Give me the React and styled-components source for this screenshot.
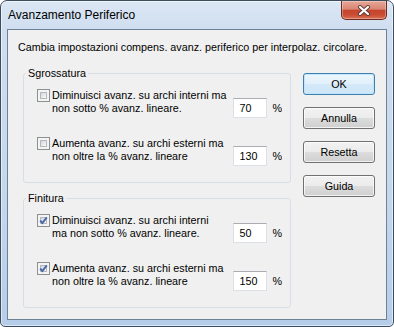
import React from 'react';
import styled, { createGlobalStyle } from 'styled-components';

const font = `"Liberation Sans", Arial, sans-serif`;

const GlobalStyle = createGlobalStyle`
  html, body {
    margin: 0;
    padding: 0;
    background: #ffffff;
  }
  body {
    font-family: ${font};
    color: #000000;
  }
`;

const Window = styled.div`
  box-sizing: border-box;
  width: 394px;
  height: 327px;
  display: flex;
  flex-direction: column;
  padding: 0 6px 6px;
  border: 1px solid #3e4d5e;
  border-radius: 7px 7px 5px 5px;
  background: linear-gradient(to bottom, #dce7f4 0px, #cfdef0 28px, #c4d7ed 60%, #b6cde9 100%);
  box-shadow: inset 0 0 0 1px rgba(255, 255, 255, 0.55);
`;

const TitleBar = styled.div`
  height: 28px;
  display: flex;
  justify-content: space-between;
  align-items: flex-start;
`;

const Title = styled.span`
  align-self: center;
  padding-left: 1px;
  font-size: 12px;
`;

const CloseButton = styled.div`
  box-sizing: border-box;
  width: 46px;
  height: 19px;
  display: flex;
  align-items: center;
  justify-content: center;
  border: 1px solid #6b2c24;
  border-top: none;
  border-radius: 0 0 5px 5px;
  background: linear-gradient(to bottom, #e7a797 0%, #d98673 45%, #c3452d 52%, #c94d33 78%, #db7257 100%);
  box-shadow: inset 0 0 0 1px rgba(255, 255, 255, 0.3);
`;

const Client = styled.div`
  flex: 1;
  display: flex;
  flex-direction: column;
  border: 1px solid #6f8196;
  background: #f0f0f0;
  padding: 10px 10px 0;
`;

const Description = styled.div`
  font-size: 10.75px;
  line-height: 15px;
`;

const MainRow = styled.div`
  display: flex;
  align-items: flex-start;
  gap: 12px;
  margin: 11px 0 0 5px;
`;

const Groups = styled.div`
  display: flex;
  flex-direction: column;
  gap: 8px;
`;

const Group = styled.fieldset`
  box-sizing: border-box;
  width: 268px;
  min-width: 0;
  margin: 0;
  padding: 0;
  border: 1px solid #d5dfe5;
  border-radius: 3px;
`;

const Legend = styled.legend`
  padding: 0 2px;
  margin-left: 2px;
  font-size: 10.75px;
  line-height: 14px;
`;

const Options = styled.div`
  display: flex;
  flex-direction: column;
  gap: 19px;
  padding: 9px 8px 16px 13px;
`;

const Row = styled.div`
  display: flex;
  align-items: flex-start;
`;

const Box = styled.span`
  box-sizing: border-box;
  position: relative;
  width: 13px;
  height: 13px;
  flex-shrink: 0;
  margin-right: 2px;
  border: 1px solid #8e8f8f;
  background: #f4f4f4;
  display: flex;
  align-items: center;
  justify-content: center;

  &::before {
    content: '';
    position: absolute;
    inset: 2px;
    border: 1px solid #b4b8bd;
    background: linear-gradient(135deg, #d4d6d9 0%, #e8e9eb 55%, #f7f7f7 100%);
  }

  svg {
    position: relative;
  }
`;

const Label = styled.span`
  flex: 1;
  font-size: 10.75px;
  line-height: 13px;
`;

const Field = styled.input`
  box-sizing: border-box;
  width: 34px;
  height: 20px;
  margin: 9px 0 0;
  padding: 0 5px;
  border: 1px solid #dbdfe6;
  border-top-color: #abadb3;
  background: #ffffff;
  font-family: ${font};
  font-size: 10.75px;
  color: #000000;
  outline: none;
`;

const Percent = styled.span`
  margin: 9px 0 0 5px;
  font-size: 10.75px;
  line-height: 20px;
`;

const Buttons = styled.div`
  display: flex;
  flex-direction: column;
  gap: 12px;
  margin-top: 7px;
`;

const Button = styled.button`
  box-sizing: border-box;
  width: 72px;
  height: 22px;
  padding: 0;
  border: 1px solid ${(p) => (p.$default ? '#3c7fb1' : '#707070')};
  border-radius: 3px;
  font-family: ${font};
  font-size: 10.75px;
  color: #000000;
  background: ${(p) =>
    p.$default
      ? 'linear-gradient(to bottom, #edf6fd 0%, #e2f0fb 50%, #d4e9f9 51%, #cfe6f8 100%)'
      : 'linear-gradient(to bottom, #f2f2f2 0%, #ebebeb 50%, #dddddd 51%, #cfcfcf 100%)'};
  box-shadow: inset 0 0 0 1px ${(p) => (p.$default ? 'rgba(190, 230, 253, 0.9)' : 'rgba(255, 255, 255, 0.75)')};
`;

const Checkbox = ({ checked }) => (
  <Box>
    {checked && (
      <svg width="11" height="11" viewBox="0 0 11 11">
        <path d="M2.2 5.6 L4.4 8 L8.8 2.4" fill="none" stroke="#4a69a8" strokeWidth="2" />
      </svg>
    )}
  </Box>
);

const Option = ({ checked, lines, value }) => (
  <Row>
    <Checkbox checked={checked} />
    <Label>
      {lines[0]}
      <br />
      {lines[1]}
    </Label>
    <Field readOnly value={value} />
    <Percent>%</Percent>
  </Row>
);

const groups = [
  {
    title: 'Sgrossatura',
    checked: false,
    options: [
      { lines: ['Diminuisci avanz. su archi interni ma', 'non sotto % avanz. lineare.'], value: '70' },
      { lines: ['Aumenta avanz. su archi esterni ma', 'non oltre la % avanz. lineare'], value: '130' },
    ],
  },
  {
    title: 'Finitura',
    checked: true,
    options: [
      { lines: ['Diminuisci avanz. su archi interni', 'ma non sotto % avanz. lineare.'], value: '50' },
      { lines: ['Aumenta avanz. su archi esterni ma', 'non oltre la % avanz. lineare'], value: '150' },
    ],
  },
];

const App = () => (
  <>
    <GlobalStyle />
    <Window>
      <TitleBar>
        <Title>Avanzamento Periferico</Title>
        <CloseButton>
          <svg width="14" height="11" viewBox="0 0 14 11">
            <path d="M3 2 L11 9 M11 2 L3 9" stroke="#5b3a36" strokeWidth="4" strokeLinecap="round" />
            <path d="M3 2 L11 9 M11 2 L3 9" stroke="#ffffff" strokeWidth="2.2" strokeLinecap="round" />
          </svg>
        </CloseButton>
      </TitleBar>
      <Client>
        <Description>
          Cambia impostazioni compens. avanz. periferico per interpolaz. circolare.
        </Description>
        <MainRow>
          <Groups>
            {groups.map((g) => (
              <Group key={g.title}>
                <Legend>{g.title}</Legend>
                <Options>
                  {g.options.map((o) => (
                    <Option key={o.value} checked={g.checked} lines={o.lines} value={o.value} />
                  ))}
                </Options>
              </Group>
            ))}
          </Groups>
          <Buttons>
            <Button $default>OK</Button>
            <Button>Annulla</Button>
            <Button>Resetta</Button>
            <Button>Guida</Button>
          </Buttons>
        </MainRow>
      </Client>
    </Window>
  </>
);

export default App;
